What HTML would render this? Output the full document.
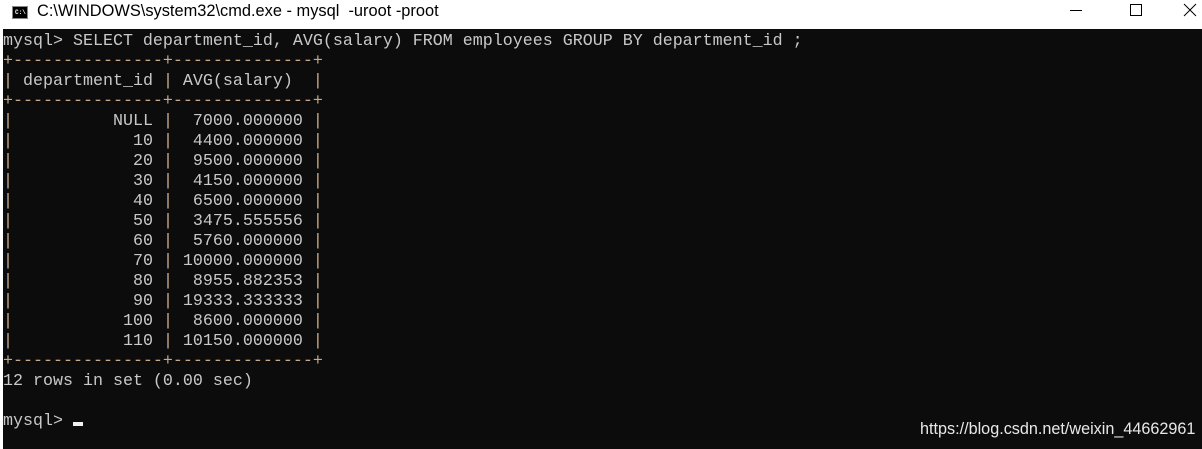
<!DOCTYPE html>
<html><head><meta charset="utf-8"><style>
html,body{margin:0;padding:0;width:1202px;height:449px;overflow:hidden;background:#fff;}
#title{position:absolute;left:0;top:0;width:1202px;height:29px;background:#fff;}
#title .t{position:absolute;left:37px;top:2px;font:16.4px "Liberation Sans",sans-serif;color:#000;}
#icon{position:absolute;left:12px;top:6px;width:16px;height:13px;background:#000;border:1px solid #888;box-sizing:border-box;}
#icon span{position:absolute;left:2px;top:2px;font:bold 6px "Liberation Mono",monospace;color:#fff;}
#term{position:absolute;left:3px;top:29px;width:1199px;height:420px;background:#0c0c0c;}
pre{margin:0;position:absolute;left:0;top:3px;font-family:"Liberation Mono",monospace;font-size:16.667px;line-height:20px;color:#c8c8c8;}
.b{color:#c9a98a;}
.cur{display:inline-block;width:10px;height:4px;background:#f0f0f0;vertical-align:-1px;}
#wm{position:absolute;left:920px;top:420px;font:16.2px "Liberation Sans",sans-serif;color:#e8e8e8;}
</style></head><body>
<div id="title"><div id="icon"><span>C:\</span></div><div class="t">C:\WINDOWS\system32\cmd.exe - mysql&nbsp; -uroot -proot</div>
<svg style="position:absolute;left:1070px;top:0" width="132" height="29"><line x1="0" y1="10.5" x2="12" y2="10.5" stroke="#000"/><rect x="60.5" y="4.5" width="11" height="11" fill="none" stroke="#000"/><path d="M114 4L126 16M126 4L114 16" stroke="#000"/></svg></div>
<div id="term"><pre>mysql&gt; SELECT department_id, AVG(salary) FROM employees GROUP BY department_id ;
<span class="b">+---------------+--------------+</span>
<span class="b">|</span> department_id <span class="b">|</span> AVG(salary)  <span class="b">|</span>
<span class="b">+---------------+--------------+</span>
<span class="b">|</span>          NULL <span class="b">|</span>  7000.000000 <span class="b">|</span>
<span class="b">|</span>            10 <span class="b">|</span>  4400.000000 <span class="b">|</span>
<span class="b">|</span>            20 <span class="b">|</span>  9500.000000 <span class="b">|</span>
<span class="b">|</span>            30 <span class="b">|</span>  4150.000000 <span class="b">|</span>
<span class="b">|</span>            40 <span class="b">|</span>  6500.000000 <span class="b">|</span>
<span class="b">|</span>            50 <span class="b">|</span>  3475.555556 <span class="b">|</span>
<span class="b">|</span>            60 <span class="b">|</span>  5760.000000 <span class="b">|</span>
<span class="b">|</span>            70 <span class="b">|</span> 10000.000000 <span class="b">|</span>
<span class="b">|</span>            80 <span class="b">|</span>  8955.882353 <span class="b">|</span>
<span class="b">|</span>            90 <span class="b">|</span> 19333.333333 <span class="b">|</span>
<span class="b">|</span>           100 <span class="b">|</span>  8600.000000 <span class="b">|</span>
<span class="b">|</span>           110 <span class="b">|</span> 10150.000000 <span class="b">|</span>
<span class="b">+---------------+--------------+</span>
12 rows in set (0.00 sec)

mysql&gt; <span class="cur"></span></pre></div>
<div id="wm">https://blog.csdn.net/weixin_44662961</div>
</body></html>
